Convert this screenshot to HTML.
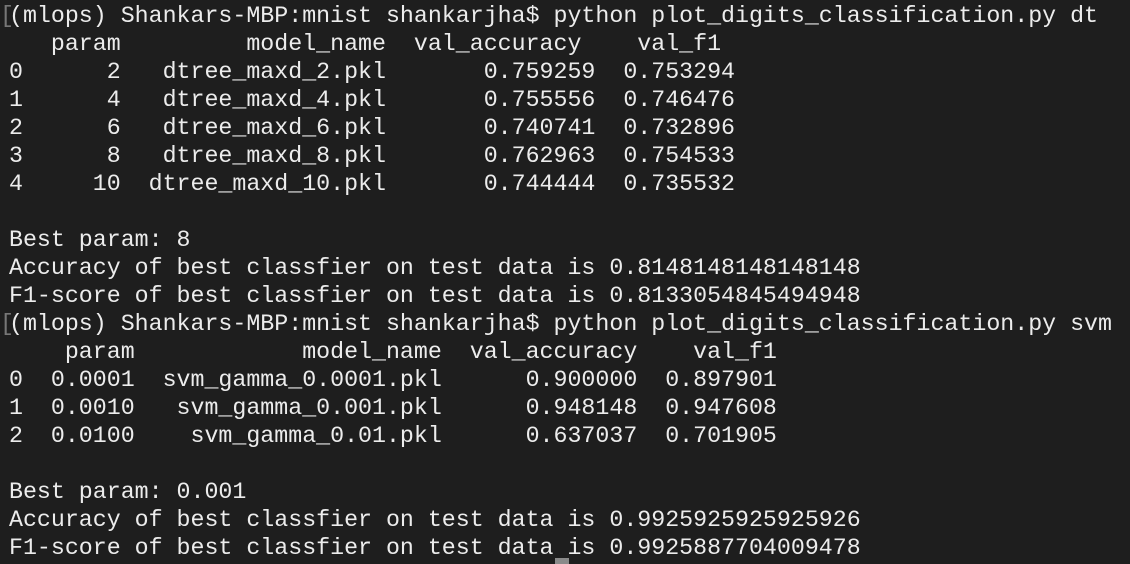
<!DOCTYPE html>
<html><head><meta charset="utf-8"><style>
html,body{margin:0;padding:0;background:#1e1e1e;width:1130px;height:564px;overflow:hidden}
pre{margin:0;position:absolute;left:9px;top:2px;font-family:"Liberation Mono","DejaVu Sans Mono",monospace;font-size:23.27px;line-height:28px;color:#ececec}
.b{position:absolute;left:0;top:2px;font-family:"Liberation Mono",monospace;font-size:23.27px;line-height:28px;color:#777}
.c{position:absolute;left:555px;top:558px;width:14px;height:6px;background:#8a8a8a}
</style></head><body>
<div class="b">[<br><br><br><br><br><br><br><br><br><br><br>[</div>
<pre>(mlops) Shankars-MBP:mnist shankarjha$ python plot_digits_classification.py dt
   param         model_name  val_accuracy    val_f1
0      2   dtree_maxd_2.pkl       0.759259  0.753294
1      4   dtree_maxd_4.pkl       0.755556  0.746476
2      6   dtree_maxd_6.pkl       0.740741  0.732896
3      8   dtree_maxd_8.pkl       0.762963  0.754533
4     10  dtree_maxd_10.pkl       0.744444  0.735532

Best param: 8
Accuracy of best classfier on test data is 0.8148148148148148
F1-score of best classfier on test data is 0.8133054845494948
(mlops) Shankars-MBP:mnist shankarjha$ python plot_digits_classification.py svm
    param            model_name  val_accuracy    val_f1
0  0.0001  svm_gamma_0.0001.pkl      0.900000  0.897901
1  0.0010   svm_gamma_0.001.pkl      0.948148  0.947608
2  0.0100    svm_gamma_0.01.pkl      0.637037  0.701905

Best param: 0.001
Accuracy of best classfier on test data is 0.9925925925925926
F1-score of best classfier on test data is 0.9925887704009478</pre>
<div class="c"></div>
</body></html>
